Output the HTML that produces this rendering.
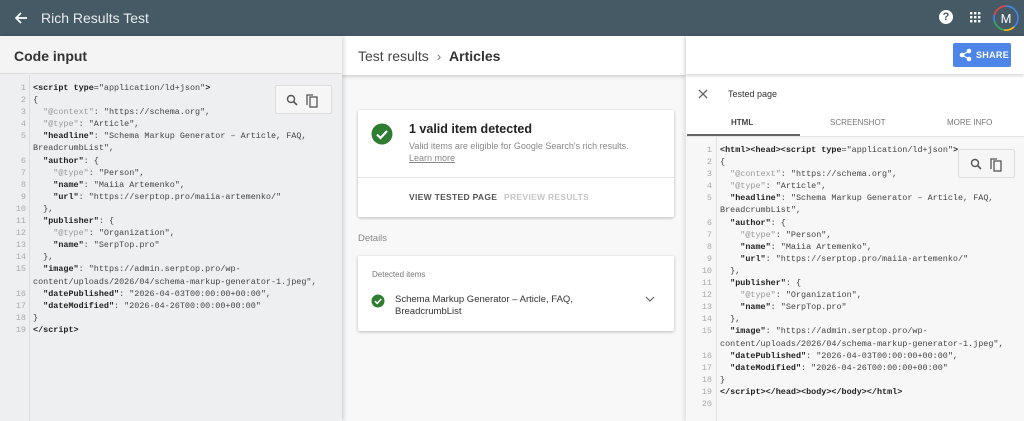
<!DOCTYPE html><html><head><style>
*{box-sizing:border-box;margin:0;padding:0}
body{width:1024px;height:421px;overflow:hidden;font-family:"Liberation Sans",sans-serif;background:#f8f8f8;position:relative}
.top{position:absolute;left:0;top:0;width:1024px;height:36px;background:#455a64;color:#e8ecee}
.left{position:absolute;left:0;top:36px;width:342px;height:385px;background:#eeeff1;box-shadow:2px 0 4px rgba(0,0,0,.15);z-index:2}
.lh{height:38px;background:#f4f4f5;border-bottom:1px solid #ddd;font-size:14px;font-weight:bold;color:#333;padding:12px 14px}
.code{font-family:"Liberation Mono",monospace;font-size:8.45px;line-height:12.1px;color:#444;white-space:pre;position:absolute}
.code b{color:#222}
.g{color:#999}
.ln{position:absolute;font-family:"Liberation Mono",monospace;font-size:8.45px;line-height:12.1px;color:#aaa;text-align:right;white-space:pre}
.mid{position:absolute;left:342px;top:36px;width:344px;height:385px;background:#f8f8f8}
.mh{height:39px;background:#fff;box-shadow:0 2px 3px rgba(0,0,0,.15);font-size:14px;color:#444;padding:12px 16px}
.card{position:absolute;background:#fff;box-shadow:0 1px 3px rgba(0,0,0,.25);border-radius:2px}
.right{position:absolute;left:686px;top:36px;width:338px;height:385px;background:#fff;box-shadow:-2px 0 4px rgba(0,0,0,.1)}
.tools{position:absolute;width:57px;height:29px;border:1px solid #ddd;border-radius:2px;background:#f6f6f6}
</style></head><body>
<div class="top">
<svg style="position:absolute;left:14px;top:11px" width="14" height="14" viewBox="0 0 14 14"><path d="M13 7H2M7 2L2 7l5 5" stroke="#fff" stroke-width="1.7" fill="none"/></svg>
<div style="position:absolute;left:41px;top:10px;font-size:14px">Rich Results Test</div>
<div style="position:absolute;left:939px;top:10px;width:14px;height:14px;border-radius:50%;background:#fff;color:#455a64;font-size:11px;font-weight:bold;text-align:center;line-height:14px">?</div>
<svg style="position:absolute;left:970px;top:12px" width="11" height="11"><g fill="#fff"><rect x="0" y="0" width="2.4" height="2.4"/><rect x="4" y="0" width="2.4" height="2.4"/><rect x="8" y="0" width="2.4" height="2.4"/><rect x="0" y="4" width="2.4" height="2.4"/><rect x="4" y="4" width="2.4" height="2.4"/><rect x="8" y="4" width="2.4" height="2.4"/><rect x="0" y="8" width="2.4" height="2.4"/><rect x="4" y="8" width="2.4" height="2.4"/><rect x="8" y="8" width="2.4" height="2.4"/></g></svg>
<svg style="position:absolute;left:992px;top:4px" width="28" height="28"><circle cx="14" cy="14" r="12" fill="#455a64" stroke="#4285f4" stroke-width="1.6"/><path d="M14 2A12 12 0 0 0 2.5 11" stroke="#ea4335" stroke-width="1.6" fill="none"/><path d="M2.5 17A12 12 0 0 0 12 26" stroke="#34a853" stroke-width="1.6" fill="none"/><path d="M12 26A12 12 0 0 0 22 23" stroke="#fbbc05" stroke-width="1.6" fill="none"/><text x="14" y="19" fill="#fff" font-size="13" text-anchor="middle" font-family="Liberation Sans">M</text></svg>
</div>
<div class="left"><div class="lh">Code input</div>
<div style="position:absolute;left:29px;top:39px;width:1px;height:346px;background:#ddd"></div>
<div class="tools" style="left:275px;top:49px"><svg style="position:absolute;left:10px;top:8px" width="32" height="14"><circle cx="5" cy="5" r="3.5" stroke="#555" stroke-width="1.4" fill="none"/><path d="M7.5 7.5l3.5 3.5" stroke="#555" stroke-width="1.6"/><rect x="24" y="3" width="7" height="10" stroke="#555" stroke-width="1.3" fill="none"/><path d="M21 11V1h6" stroke="#555" stroke-width="1.3" fill="none"/></svg></div>
<div class="ln" style="left:6px;top:46px;width:20px">1
2
3
4
5

6
7
8
9
10
11
12
13
14
15

16
17
18
19</div>
<div class="code" style="left:33px;top:46px"><b>&lt;script type</b>=<span>"application/ld+json"</span><b>&gt;</b>
{
  <span class="g">"@context"</span>: "https://schema.org",
  <span class="g">"@type"</span>: "Article",
  <b>"headline"</b>: "Schema Markup Generator – Article, FAQ,
BreadcrumbList",
  <b>"author"</b>: {
    <span class="g">"@type"</span>: "Person",
    <b>"name"</b>: "Maiia Artemenko",
    <b>"url"</b>: "https://serptop.pro/maiia-artemenko/"
  },
  <b>"publisher"</b>: {
    <span class="g">"@type"</span>: "Organization",
    <b>"name"</b>: "SerpTop.pro"
  },
  <b>"image"</b>: "https://admin.serptop.pro/wp-
content/uploads/2026/04/schema-markup-generator-1.jpeg",
  <b>"datePublished"</b>: "2026-04-03T00:00:00+00:00",
  <b>"dateModified"</b>: "2026-04-26T00:00:00+00:00"
}
<b>&lt;/script&gt;</b></div>
</div>
<div class="mid"><div class="mh">Test results &nbsp;<span style="color:#777">›</span>&nbsp; <b style="color:#333">Articles</b></div>
<div class="card" style="left:16px;top:74px;width:316px;height:107px">
<svg style="position:absolute;left:13px;top:13px" width="22" height="22"><circle cx="11" cy="11" r="10.5" fill="#2e7d32"/><path d="M6 11.5l3.5 3.5 6.5-7" stroke="#fff" stroke-width="2.2" fill="none"/></svg>
<div style="position:absolute;left:51px;top:12px;font-size:12.5px;font-weight:bold;color:#222">1 valid item detected</div>
<div style="position:absolute;left:51px;top:30px;font-size:9px;color:#888;line-height:12px">Valid items are eligible for Google Search's rich results.<br><u>Learn more</u></div>
<div style="position:absolute;left:0;top:67px;width:100%;height:1px;background:#e6e6e6"></div>
<div style="position:absolute;left:51px;top:82px;font-size:8.5px;font-weight:bold;color:#555;letter-spacing:.3px">VIEW TESTED PAGE</div>
<div style="position:absolute;left:146px;top:82px;font-size:8.5px;font-weight:bold;color:#c6c6c6;letter-spacing:.3px">PREVIEW RESULTS</div>
</div>
<div style="position:absolute;left:16px;top:197px;font-size:9.5px;color:#888">Details</div>
<div class="card" style="left:16px;top:220px;width:316px;height:75px">
<div style="position:absolute;left:14px;top:14px;font-size:8px;color:#777">Detected items</div>
<svg style="position:absolute;left:13px;top:38px" width="14" height="14"><circle cx="7" cy="7" r="6.5" fill="#2e7d32"/><path d="M4 7.2l2.2 2.2 4-4.4" stroke="#fff" stroke-width="1.5" fill="none"/></svg>
<div style="position:absolute;left:37px;top:38px;font-size:9.5px;color:#333;line-height:12px">Schema Markup Generator – Article, FAQ,<br>BreadcrumbList</div>
<svg style="position:absolute;left:287px;top:40px" width="10" height="7"><path d="M1 1l4 4 4-4" stroke="#666" stroke-width="1.2" fill="none"/></svg>
</div>
</div>
<div class="right">
<div style="height:38px;background:#fff;box-shadow:0 2px 3px rgba(0,0,0,.15);position:relative;z-index:1">
<div style="position:absolute;left:267px;top:7px;width:58px;height:24px;background:#4d86e8;border-radius:2px;color:#fff;font-size:9px;font-weight:bold;letter-spacing:.3px"><svg style="position:absolute;left:6px;top:5px" width="13" height="14"><circle cx="10" cy="3" r="2.3" fill="#fff"/><circle cx="3" cy="7" r="2.3" fill="#fff"/><circle cx="10" cy="11" r="2.3" fill="#fff"/><path d="M10 3L3 7l7 4" stroke="#fff" stroke-width="1.2" fill="none"/></svg><span style="position:absolute;left:23px;top:7px">SHARE</span></div></div>
<svg style="position:absolute;left:12px;top:53px" width="10" height="10"><path d="M1 1l8 8M9 1L1 9" stroke="#666" stroke-width="1.3"/></svg>
<div style="position:absolute;left:42px;top:53px;font-size:9px;color:#333">Tested page</div>
<div style="position:absolute;left:45px;top:82px;font-size:8px;font-weight:bold;color:#444">HTML</div>
<div style="position:absolute;left:144px;top:82px;font-size:8px;color:#777">SCREENSHOT</div>
<div style="position:absolute;left:261px;top:82px;font-size:8px;color:#777">MORE INFO</div>
<div style="position:absolute;left:1px;top:98px;width:113px;height:2px;background:#666"></div>
<div style="position:absolute;left:0;top:100px;width:338px;height:1px;background:#e4e4e4"></div>
<div style="position:absolute;left:0;top:101px;width:338px;height:284px;background:#f7f7f7"></div>
<div style="position:absolute;left:30px;top:101px;width:1px;height:284px;background:#e2e2e2"></div>
<div class="tools" style="left:272px;top:113px"><svg style="position:absolute;left:11px;top:8px" width="32" height="14"><circle cx="5" cy="5" r="3.5" stroke="#555" stroke-width="1.4" fill="none"/><path d="M7.5 7.5l3.5 3.5" stroke="#555" stroke-width="1.6"/><rect x="24" y="3" width="7" height="10" stroke="#555" stroke-width="1.3" fill="none"/><path d="M21 11V1h6" stroke="#555" stroke-width="1.3" fill="none"/></svg></div>
<div class="ln" style="left:6px;top:108px;width:20px">1
2
3
4
5

6
7
8
9
10
11
12
13
14
15

16
17
18
19
20</div>
<div class="code" style="left:34px;top:108px"><b>&lt;html&gt;&lt;head&gt;&lt;script type</b>=<span>"application/ld+json"</span><b>&gt;</b>
{
  <span class="g">"@context"</span>: "https://schema.org",
  <span class="g">"@type"</span>: "Article",
  <b>"headline"</b>: "Schema Markup Generator – Article, FAQ,
BreadcrumbList",
  <b>"author"</b>: {
    <span class="g">"@type"</span>: "Person",
    <b>"name"</b>: "Maiia Artemenko",
    <b>"url"</b>: "https://serptop.pro/maiia-artemenko/"
  },
  <b>"publisher"</b>: {
    <span class="g">"@type"</span>: "Organization",
    <b>"name"</b>: "SerpTop.pro"
  },
  <b>"image"</b>: "https://admin.serptop.pro/wp-
content/uploads/2026/04/schema-markup-generator-1.jpeg",
  <b>"datePublished"</b>: "2026-04-03T00:00:00+00:00",
  <b>"dateModified"</b>: "2026-04-26T00:00:00+00:00"
}
<b>&lt;/script&gt;&lt;/head&gt;&lt;body&gt;&lt;/body&gt;&lt;/html&gt;</b>
</div>
</div>
</body></html>
